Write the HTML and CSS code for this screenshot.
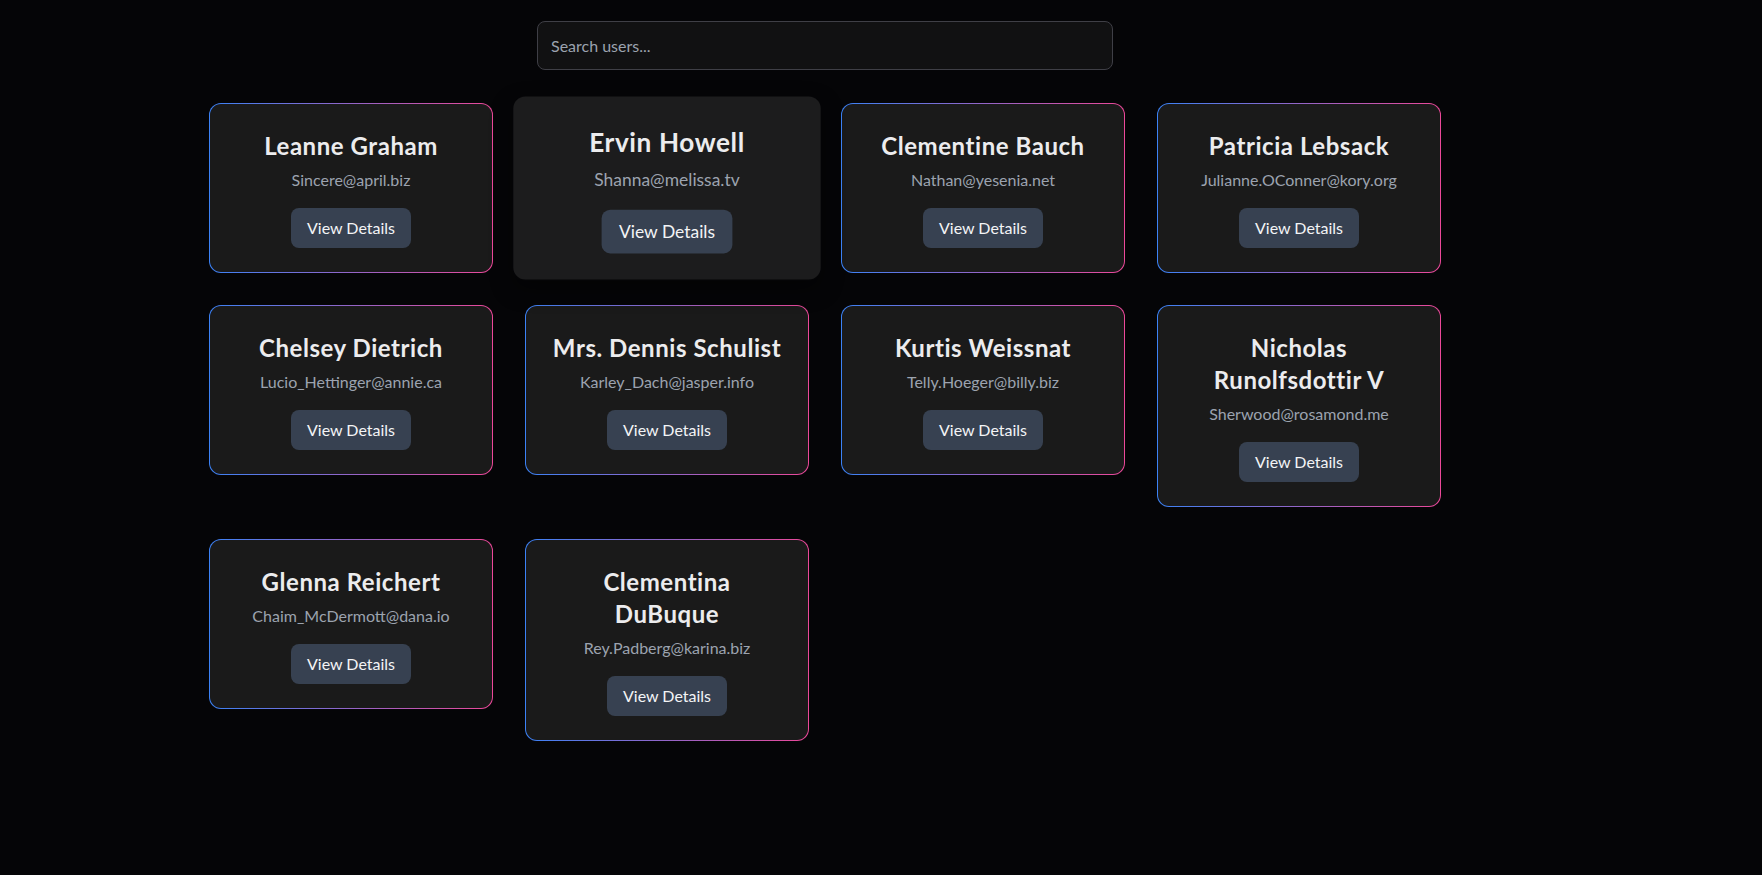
FILE: index.html
```html
<!DOCTYPE html>
<html lang="en">
<head>
<meta charset="utf-8">
<title>Users</title>
<link rel="stylesheet" href="styles.css">
</head>
<body>
<div class="app">
  <div class="search-wrap">
    <input class="search" type="text" placeholder="Search users...">
  </div>
  <div class="grid">
    <div class="card-border"><div class="card"><h2 class="name">Leanne Graham</h2><p class="email">Sincere@april.biz</p><button class="btn">View Details</button></div></div>
    <div class="card-border is-hover"><div class="card"><h2 class="name">Ervin Howell</h2><p class="email">Shanna@melissa.tv</p><button class="btn">View Details</button></div></div>
    <div class="card-border"><div class="card"><h2 class="name">Clementine Bauch</h2><p class="email">Nathan@yesenia.net</p><button class="btn">View Details</button></div></div>
    <div class="card-border"><div class="card"><h2 class="name">Patricia Lebsack</h2><p class="email">Julianne.OConner@kory.org</p><button class="btn">View Details</button></div></div>
    <div class="card-border"><div class="card"><h2 class="name">Chelsey Dietrich</h2><p class="email">Lucio_Hettinger@annie.ca</p><button class="btn">View Details</button></div></div>
    <div class="card-border"><div class="card"><h2 class="name">Mrs. Dennis Schulist</h2><p class="email">Karley_Dach@jasper.info</p><button class="btn">View Details</button></div></div>
    <div class="card-border"><div class="card"><h2 class="name">Kurtis Weissnat</h2><p class="email">Telly.Hoeger@billy.biz</p><button class="btn">View Details</button></div></div>
    <div class="card-border"><div class="card"><h2 class="name">Nicholas Runolfsdottir V</h2><p class="email">Sherwood@rosamond.me</p><button class="btn">View Details</button></div></div>
    <div class="card-border"><div class="card"><h2 class="name">Glenna Reichert</h2><p class="email">Chaim_McDermott@dana.io</p><button class="btn">View Details</button></div></div>
    <div class="card-border"><div class="card"><h2 class="name">Clementina DuBuque</h2><p class="email">Rey.Padberg@karina.biz</p><button class="btn">View Details</button></div></div>
  </div>
</div>
</body>
</html>
```

FILE: styles.css
```css
* { box-sizing: border-box; }

html, body {
  margin: 0;
  background: #050507;
}

body {
  font-family: "Lato", "Noto Sans", sans-serif;
  color: #e5e7eb;
  min-height: 875px;
}

.app {
  width: 1280px;
  margin-left: 185px;
  padding: 21px 24px 24px;
}

.search-wrap {
  display: flex;
  justify-content: center;
  margin-bottom: 33px;
}

.search {
  width: 576px;
  height: 49px;
  padding: 0 13px;
  background: #111112;
  border: 1px solid #3f3f46;
  border-radius: 8px;
  color: #e5e7eb;
  font-family: inherit;
  font-size: 16px;
  outline: none;
}

.search::placeholder {
  color: #9ca3af;
}

.grid {
  display: grid;
  grid-template-columns: repeat(4, 284px);
  gap: 32px;
  align-items: start;
}

.card-border {
  padding: 1px;
  border-radius: 12px;
  background: linear-gradient(to right, #3b82f6, #ec4899);
}

.card {
  background: #1a1a1a;
  border-radius: 11px;
  padding: 24px;
  text-align: center;
}

.card-border.is-hover {
  background: transparent;
  transform: scale(1.09);
  box-shadow: 0 8px 20px rgba(0, 0, 0, 0.4);
}

.card-border.is-hover .card {
  background: #1c1c1d;
}

.name {
  margin: 0 0 6px;
  padding-top: 2px;
  font-size: 24px;
  line-height: 32px;
  font-weight: 700;
  letter-spacing: 0.55px;
  color: #ececee;
}

.email {
  margin: 0;
  font-size: 16px;
  line-height: 24px;
  color: #9ca3af;
}

.btn {
  margin-top: 16px;
  padding: 8px 16px;
  background: #374151;
  color: #f3f4f6;
  border: none;
  border-radius: 8px;
  font-family: inherit;
  font-size: 16px;
  line-height: 24px;
}
```
